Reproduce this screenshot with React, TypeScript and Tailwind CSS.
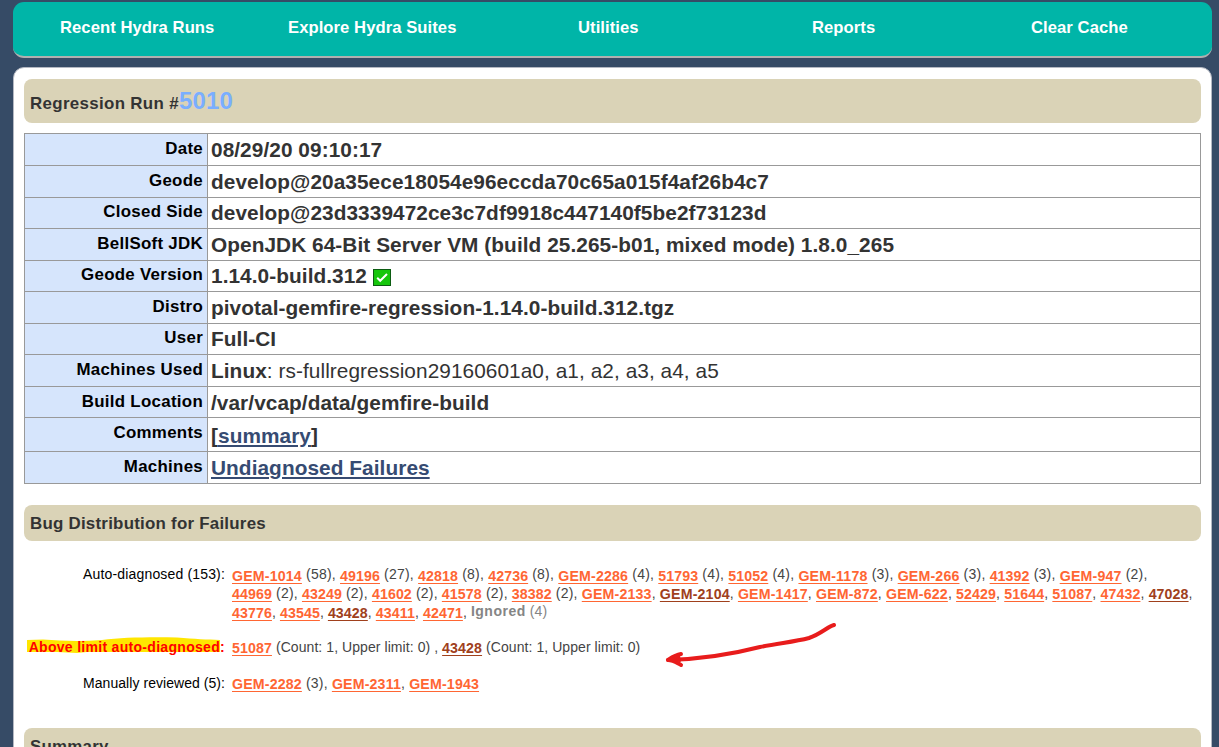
import React from "react";

const nav = [
  { label: "Recent Hydra Runs", cls: "w-[154px] ml-[47px]" },
  { label: "Explore Hydra Suites", cls: "w-[169px] ml-[74px]" },
  { label: "Utilities", cls: "w-[61px] ml-[121px]" },
  { label: "Reports", cls: "w-[64px] ml-[173px]" },
  { label: "Clear Cache", cls: "w-[98px] ml-[155px]" },
];

function CheckMark() {
  return (
    <svg className="ml-[6px] mt-[6px] h-[17px] w-[18px]" viewBox="0 0 18 17">
      <rect x="0.5" y="0.5" width="17" height="16" fill="#16c60c" stroke="#0c5c12" />
      <path d="M4.2 8.8 L7.2 11.8 L14 5" fill="none" stroke="#fff" strokeWidth="2" />
    </svg>
  );
}

// Rows alternate between 31px and 32px; the shorter ones sit their text one pixel higher.
const rows: { label: string; h: string; value: React.ReactNode }[] = [
  { label: "Date", h: "h-[32px] pt-[3px]", value: "08/29/20 09:10:17" },
  { label: "Geode", h: "h-[32px] pt-[3px]", value: "develop@20a35ece18054e96eccda70c65a015f4af26b4c7" },
  { label: "Closed Side", h: "h-[31px] pt-[2px]", value: "develop@23d3339472ce3c7df9918c447140f5be2f73123d" },
  { label: "BellSoft JDK", h: "h-[32px] pt-[3px]", value: "OpenJDK 64-Bit Server VM (build 25.265-b01, mixed mode) 1.8.0_265" },
  { label: "Geode Version", h: "h-[31px] pt-[2px]", value: <span className="flex">1.14.0-build.312<CheckMark /></span> },
  { label: "Distro", h: "h-[32px] pt-[3px]", value: "pivotal-gemfire-regression-1.14.0-build.312.tgz" },
  { label: "User", h: "h-[31px] pt-[2px]", value: "Full-CI" },
  {
    label: "Machines Used",
    h: "h-[32px] pt-[3px]",
    value: (
      <>
        Linux<span className="font-normal">: rs-fullregression29160601a0, a1, a2, a3, a4, a5</span>
      </>
    ),
  },
  { label: "Build Location", h: "h-[31px] pt-[3px]", value: "/var/vcap/data/gemfire-build" },
  {
    label: "Comments",
    h: "h-[34px] pt-[3px]",
    value: (
      <span className="block pt-[2px]">
        [<a className="text-[#364b72] underline decoration-2 underline-offset-2">summary</a>]
      </span>
    ),
  },
  {
    label: "Machines",
    h: "h-[32px] pt-[3px]",
    value: <a className="text-[#364b72] underline decoration-2 underline-offset-2">Undiagnosed Failures</a>,
  },
];

type Bug = [string, number?, boolean?];

const line1: Bug[] = [
  ["GEM-1014", 58], ["49196", 27], ["42818", 8], ["42736", 8], ["GEM-2286", 4], ["51793", 4],
  ["51052", 4], ["GEM-1178", 3], ["GEM-266", 3], ["41392", 3], ["GEM-947", 2],
];
const line2: Bug[] = [
  ["44969", 2], ["43249", 2], ["41602", 2], ["41578", 2], ["38382", 2], ["GEM-2133"],
  ["GEM-2104", undefined, true], ["GEM-1417"], ["GEM-872"], ["GEM-622"], ["52429"], ["51644"],
  ["51087"], ["47432"], ["47028", undefined, true],
];
const line3: Bug[] = [["43776"], ["43545"], ["43428", undefined, true], ["43411"], ["42471"]];

function BugLink({ id, dark, low }: { id: string; dark?: boolean; low?: boolean }) {
  return (
    <a
      className={
        "text-[14.2px] leading-none font-bold underline decoration-1 underline-offset-2 " +
        (id.startsWith("GEM") ? "tracking-[0.16px] " : "tracking-[0.1px] ") +
        (low ? "align-[-2px] " : "align-[-1px] ") +
        (dark ? "text-[#a0401c]" : "text-[#ff6633]")
      }
    >
      {id}
    </a>
  );
}

function Bugs({ items, low }: { items: Bug[]; low?: boolean }) {
  return (
    <>
      {items.map(([id, count, dark]) => (
        <React.Fragment key={id}>
          <BugLink id={id} dark={dark} low={low} />
          {count !== undefined ? ` (${count})` : ""}
          {", "}
        </React.Fragment>
      ))}
    </>
  );
}

function Heading({ children, cls }: { children: React.ReactNode; cls: string }) {
  return (
    <h2 className={"rounded-[8px] bg-[#dad3b7] pl-[6px] text-[16.9px] font-bold text-[#333] " + cls}>
      {children}
    </h2>
  );
}

export default function App() {
  return (
    <div className="h-[747px] w-[1219px] overflow-hidden bg-[#364b66] pt-[2px] pl-[13px] font-['Liberation_Sans',Arial,sans-serif] whitespace-nowrap">
      <nav className="flex h-[56px] w-[1199px] rounded-[11px] border-b-2 border-[#b0b0b0] bg-[#00b5a8] pt-[13px] text-[16.64px] leading-[25px] font-bold tracking-[0.06px] text-white">
        {nav.map((n) => (
          <a key={n.label} className={n.cls}>{n.label}</a>
        ))}
      </nav>

      <main className="mt-[9px] h-[720px] w-[1199px] rounded-t-[11px] border border-[#b4b8c2] bg-white px-[10px] pt-[11px]">
        <Heading cls="h-[44px] leading-[44px] tracking-[0.33px]">
          Regression Run #<span className="text-[24px] tracking-[0.2px] text-[#7aaeff]">5010</span>
        </Heading>

        <div className="mt-[10px] border-t border-l border-[#999]">
          {rows.map((r) => (
            <div key={r.label} className="flex border-r border-b border-[#999]">
              <div className={"-mb-px w-[183px] border-r border-b border-[#999] bg-[#d6e5fc] pr-[4px] text-right text-[16.9px] leading-[24px] font-bold tracking-[0.28px] text-black " + r.h}>
                {r.label}
              </div>
              <div className="pl-[3px]">
                <div className={"text-[20.8px] leading-[26px] font-bold tracking-[0.07px] text-[#333] -mb-px " + r.h}>
                  {r.value}
                </div>
              </div>
            </div>
          ))}
        </div>

        <Heading cls="mt-[21px] h-[36px] leading-[37px] tracking-[0.24px]">Bug Distribution for Failures</Heading>

        <div className="mt-[24px] flex h-[73px] text-[14px] tracking-[0.2px] text-[#444]">
          <div className="w-[201px] text-right leading-[19px] tracking-[0.16px] text-black">Auto-diagnosed (153):</div>
          <div className="ml-[7px] leading-[19px]">
            <div className="h-[19px] tracking-[0.22px]"><Bugs items={line1} low /></div>
            <div className="h-[18px]"><Bugs items={line2} /></div>
            <div className="h-[19px] tracking-[0.1px]">
              <Bugs items={line3} />
              <span className="align-[1px] text-[#858585]"><b className="tracking-[0.5px]">Ignored</b> (4)</span>
            </div>
          </div>
        </div>

        <div className="flex h-[36px] text-[14px] leading-[19px] tracking-[0.07px] text-[#444]">
          <div className="relative w-[201px] text-right font-bold tracking-[0.3px] text-[#f00]">
            <svg className="absolute top-[-1px] left-[3px] h-[17px] w-[193px]" viewBox="0 0 193 17">
              <path d="M0 3 L16 2.5 C35 4 55 4.5 75 3 C95 0.5 120 0 150 0.5 C168 2 180 2.5 193 3 V15 H60 L50 16 L30 15 H0Z" fill="#ffe600" />
            </svg>
            <span className="relative">Above limit auto-diagnosed:</span>
          </div>
          <div className="ml-[7px] w-[408px]">
            <BugLink id="51087" /> (Count: 1, Upper limit: 0) , <BugLink id="43428" dark /> (Count: 1, Upper limit: 0)
          </div>
          <div className="relative">
            <svg className="absolute top-[-16px] left-[24px] h-[46px] w-[174px]" viewBox="0 0 174 46" fill="none" stroke="#e81c1c" strokeWidth="4" strokeLinecap="round" strokeLinejoin="round">
              <path d="M170 3 C163 5 157 12 145 16 C130 20 115 21 96 25 C65 33 38 37 4 38" />
              <path d="M17 32 C11 33 7 36 4 38 C9 38 13 41 17 43" />
              <path d="M5 38 L15 34 L16 39Z" fill="#e81c1c" strokeWidth="2" />
            </svg>
          </div>
        </div>

        <div className="flex h-[54px] text-[14px] leading-[19px] tracking-[0.2px] text-[#444]">
          <div className="w-[201px] text-right tracking-[0.05px] text-black">Manually reviewed (5):</div>
          <div className="ml-[7px]">
            <BugLink id="GEM-2282" /> (3), <BugLink id="GEM-2311" />, <BugLink id="GEM-1943" />
          </div>
        </div>

        <Heading cls="h-[36px] leading-[37px] tracking-[0.24px]">Summary</Heading>
      </main>
    </div>
  );
}
